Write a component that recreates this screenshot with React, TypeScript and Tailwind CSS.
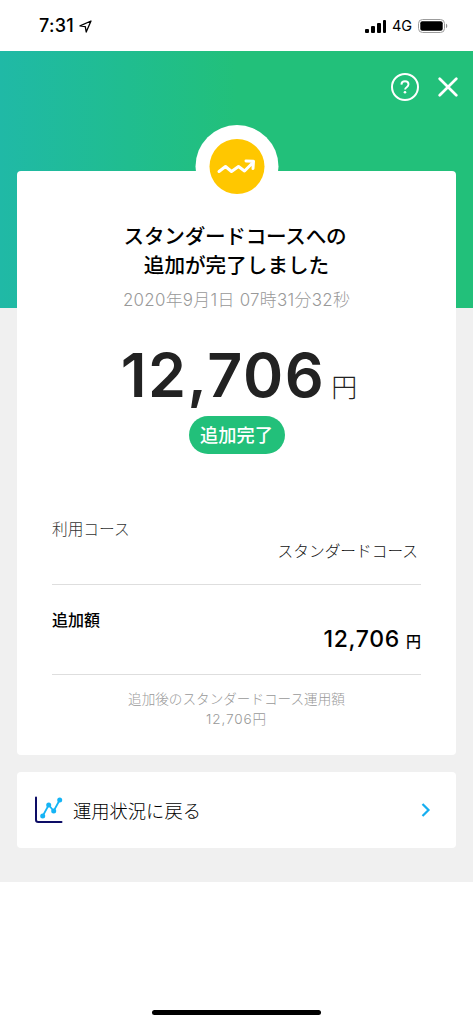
import type { ReactNode } from "react";

function StatusBar() {
  return (
    <div className="flex h-[51px] items-center justify-between pt-px pr-[26px] pl-[39px] text-black">
      <div className="flex items-center gap-[4px]">
        <span className="w-[36px] font-['Inter',sans-serif] text-[18px] leading-6 font-medium tracking-[0.3px]">
          7:31
        </span>
        <svg className="h-[13px] w-[13px]" viewBox="0 0 13 13" fill="none">
          <path
            d="M12 1 1 5.9l5.3.8.9 5.3L12 1Z"
            stroke="currentColor"
            strokeWidth="1.3"
            strokeLinejoin="round"
          />
        </svg>
      </div>

      <div className="flex items-center">
        <div className="flex items-end gap-[2px]">
          <span className="h-[4px] w-[4px] rounded-[1px] bg-black" />
          <span className="h-[7px] w-[4px] rounded-[1px] bg-black" />
          <span className="h-[10px] w-[4px] rounded-[1px] bg-black" />
          <span className="h-[13px] w-[3px] rounded-[1px] bg-black" />
        </div>
        <span className="ml-[6px] w-[20px] font-['Inter',sans-serif] text-[14.5px] leading-6 tracking-[-0.2px]">
          4G
        </span>
        <svg className="ml-[6px] h-[14px] w-[30px]" viewBox="0 0 30 14">
          <rect x=".5" y=".5" width="26" height="13" rx="4" fill="#fff" stroke="#9c9c9c" />
          <rect x="2.3" y="2.3" width="22.4" height="9.4" rx="2" fill="#000" />
          <path d="M28 4.8c1.7.6 1.7 3.8 0 4.4Z" fill="#8f8f8f" />
        </svg>
      </div>
    </div>
  );
}

function Header() {
  return (
    <header className="h-[257px] bg-linear-to-r from-[#20b9a6] to-[#22c07a] to-50%">
      <div className="flex items-center justify-end gap-[18px] pt-[21px] pr-[15px]">
        <button aria-label="ヘルプ">
          <svg className="h-[30px] w-[30px]" viewBox="0 0 30 30" fill="none">
            <circle cx="15" cy="15" r="13" stroke="#fff" strokeWidth="2" />
            <path
              d="M11.4 12.6c.1-2.1 1.6-3.3 3.6-3.3 2 0 3.5 1.2 3.5 3 0 1.5-.8 2.2-1.8 2.9-1.1.8-1.6 1.2-1.6 2.4"
              stroke="#fff"
              strokeWidth="1.9"
            />
            <circle cx="15" cy="20.2" r="1.3" fill="#fff" />
          </svg>
        </button>
        <button aria-label="閉じる">
          <svg className="h-[20px] w-[20px]" viewBox="0 0 20 20" fill="none">
            <path
              d="m1.7 1.7 16.6 16.6m0-16.6L1.7 18.3"
              stroke="#fff"
              strokeWidth="2.7"
              strokeLinecap="round"
            />
          </svg>
        </button>
      </div>
    </header>
  );
}

function CourseBadge() {
  return (
    <div className="absolute top-[-46px] left-1/2 flex h-[83px] w-[83px] -translate-x-1/2 items-center justify-center rounded-full bg-white">
      <div className="flex h-[55px] w-[55px] items-center justify-center rounded-full bg-[#ffc700]">
        <svg className="h-[16px] w-[40px]" viewBox="0 0 40 16" fill="none">
          <path
            d="m2.5 12.5 6.5-5 6 5 7-5 6 4.5 8.500-8.500M29.500 1.900l7.500.300-.500 7.300"
            stroke="#fff"
            strokeWidth="3"
            strokeLinecap="round"
            strokeLinejoin="round"
          />
        </svg>
      </div>
    </div>
  );
}

function DetailRow({ label, children }: { label: ReactNode; children: ReactNode }) {
  return (
    <div className="flex h-[90px] flex-col border-b border-[#dedede] pt-[23px]">
      {label}
      {children}
    </div>
  );
}

function ResultCard() {
  return (
    <section className="relative mx-[17px] mt-[-137px] h-[584px] rounded-[4px] bg-white px-[35px] pt-[52px] text-center">
      <CourseBadge />
      <h1 className="text-[20.6px] leading-[28.5px] font-medium text-black">
        <span className="mr-[3px] tracking-[-0.25px]">スタンダードコースへの</span>
        <br />
        追加が完了しました
      </h1>
      <p className="mt-[8px] text-[16.9px] leading-6 font-light tracking-[0.3px] whitespace-nowrap text-[#999]">
        2020年9月1日 07時31分32秒
      </p>

      <div className="mt-[32px] flex h-[62px] items-baseline justify-center pl-[5px] leading-[62px] text-[#222]">
        <span className="text-[61px] font-semibold tracking-[1.5px]">12,706</span>
        <span className="ml-[6px] text-[26px] font-light">円</span>
      </div>
      <div className="mx-auto mt-[10px] flex h-[38px] w-[96px] items-center justify-center rounded-full bg-[#22c07a] pt-[2px] text-[18.2px] font-medium whitespace-nowrap text-white">
        追加完了
      </div>

      <div className="mt-[41px]">
        <DetailRow
          label={
            <span className="text-left text-[15.7px] leading-6 font-light text-[#333]">
              利用コース
            </span>
          }
        >
          <span className="mt-[-2px] pr-[3px] text-right text-[15.7px] leading-6 font-light text-[#111]">
            スタンダードコース
          </span>
        </DetailRow>
        <DetailRow
          label={
            <span className="text-left text-[16px] leading-6 font-medium text-black">追加額</span>
          }
        >
          <span className="mt-[-7px] text-right text-[23px] leading-[28px] font-medium tracking-[0.7px] text-black">
            12,706<span className="ml-[6px] text-[15px] tracking-normal">円</span>
          </span>
        </DetailRow>
      </div>

      <p className="mt-[14px] text-[13.6px] leading-5 font-light text-[#999]">
        追加後のスタンダードコース運用額
        <br />
        <span className="tracking-[0.9px]">12,706円</span>
      </p>
    </section>
  );
}

function BackLink() {
  return (
    <button className="mx-[17px] mt-[17px] flex h-[76px] w-[439px] items-center rounded-[4px] bg-white pr-[25px] pl-[17px]">
      <svg className="h-[28px] w-[29px]" viewBox="0 0 29 28" fill="none">
        <path
          d="M2 1.5v22.3q0 2.2 2.2 2.2H27.5"
          stroke="#0d0d66"
          strokeWidth="2"
          strokeLinecap="round"
        />
        <path d="m8.7 20 6-11 5 6 6-11" stroke="#15b4f5" strokeWidth="1.8" />
        <circle cx="8.7" cy="20" r="2.5" fill="#15b4f5" />
        <circle cx="14.7" cy="9" r="2.5" fill="#15b4f5" />
        <circle cx="19.7" cy="15" r="2.5" fill="#15b4f5" />
        <circle cx="25.7" cy="4" r="2.5" fill="#15b4f5" />
      </svg>
      <span className="mt-px ml-[10px] text-[18.3px] leading-6 font-light text-black">
        運用状況に戻る
      </span>
      <svg className="ml-auto h-[16px] w-[11px]" viewBox="0 0 11 16" fill="none">
        <path d="m2.5 2 6 6-6 6" stroke="#15aef0" strokeWidth="2.2" />
      </svg>
    </button>
  );
}

export default function App() {
  return (
    <div className="flex h-[1024px] w-[474px] flex-col overflow-hidden bg-white font-['Inter','Noto_Sans_CJK_JP',sans-serif]">
      <StatusBar />
      <main className="h-[831px] w-[473px] bg-[#f0f0f0]">
        <Header />
        <ResultCard />
        <BackLink />
      </main>
      <div className="mt-auto mb-[9px] ml-[152px] h-[5px] w-[169px] rounded-full bg-black" />
    </div>
  );
}
